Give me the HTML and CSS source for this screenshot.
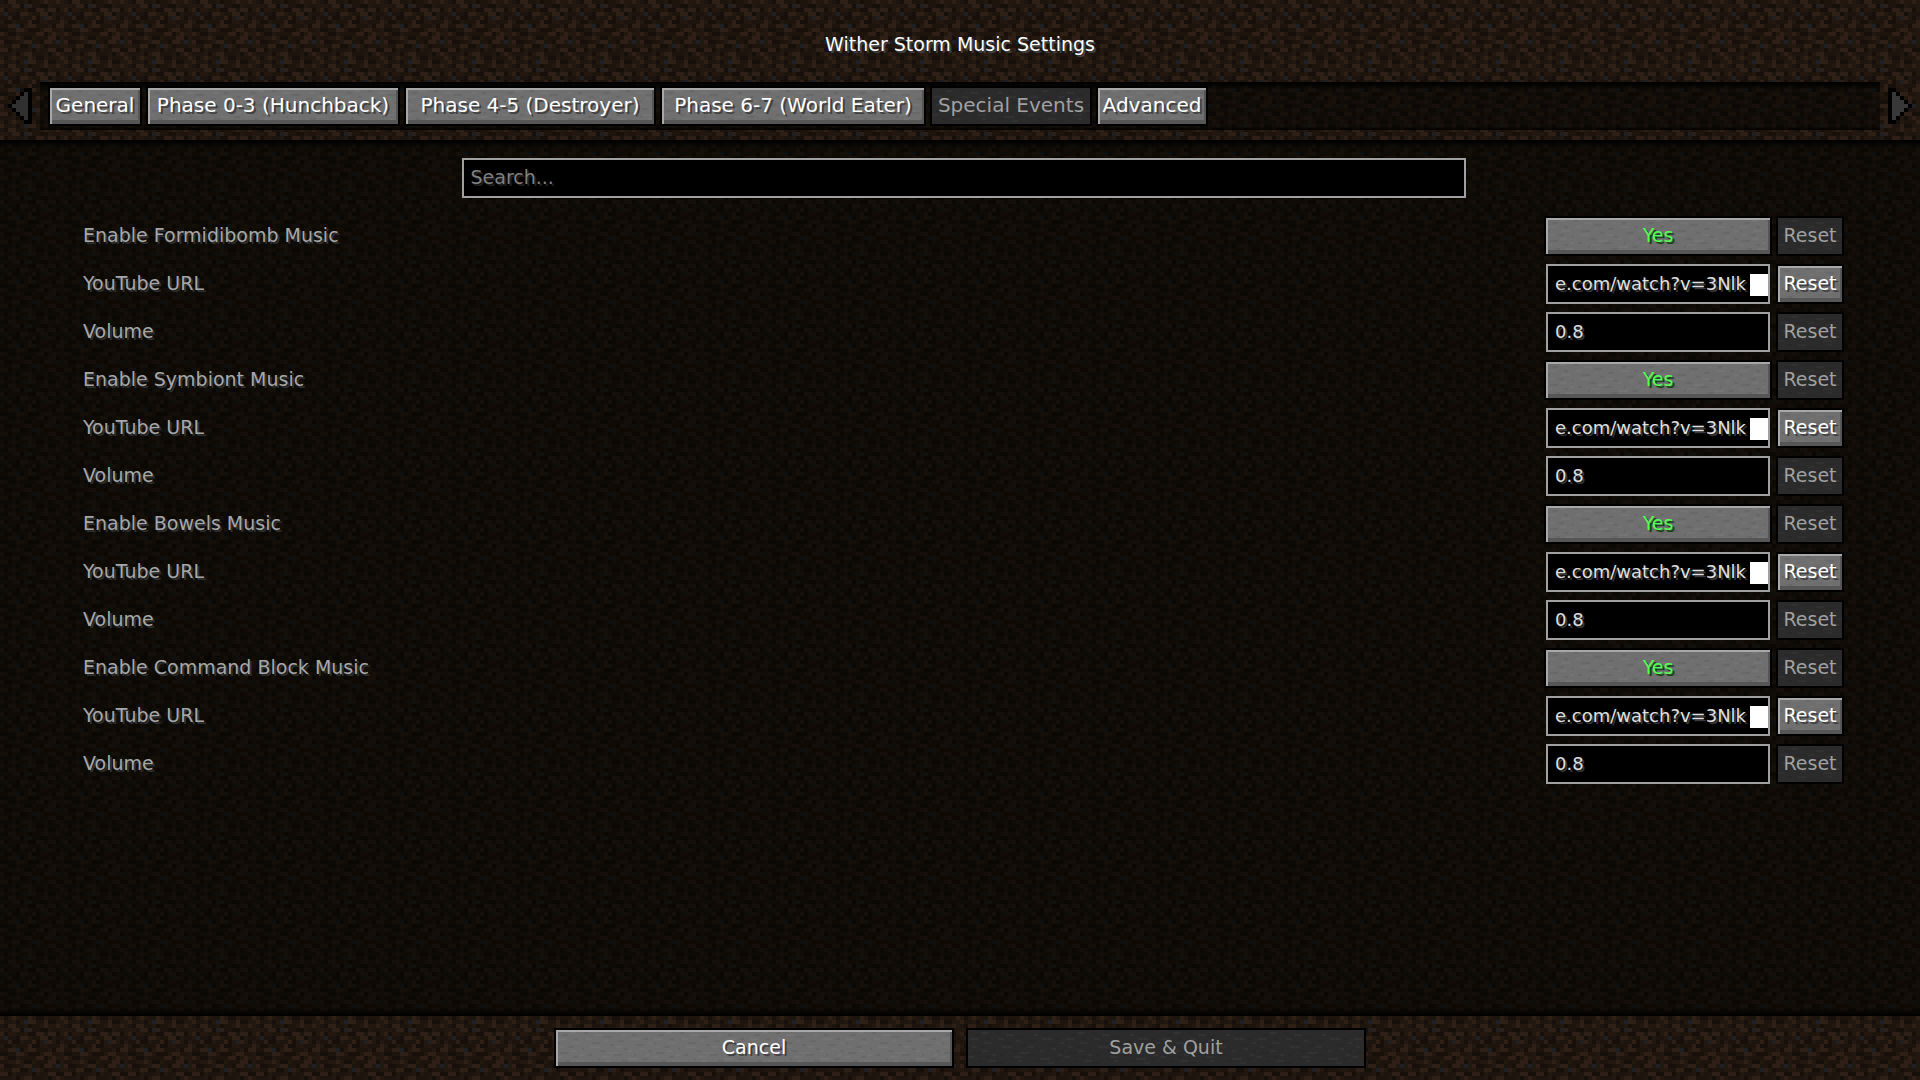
FILE: index.html
```
<!DOCTYPE html>
<html lang="en">
<head>
    <meta charset="UTF-8">
    <meta name="viewport" content="width=device-width, initial-scale=1.0">
    <title>Wither Storm Music Settings</title>
    <link rel="stylesheet" href="styles.css">
</head>
<body>
    <header class="header">
        <h1>Wither Storm Music Settings</h1>
        <div class="tab-bar">
            <button type="button" class="arrow" aria-label="Previous tabs" disabled>
                <svg width="24" height="36" viewBox="0 0 6 9" shape-rendering="crispEdges">
                    <path d="M4 0h2v9h-2v-1h-1v-1h-1v-1h-1v-1h-1v-1h1v-1h1v-1h1v-1h1z" fill="#000"/>
                    <path d="M4 1h1v7h-1v-1h-1v-1h-1v-1h-1v-1h1v-1h1v-1h1z" fill="#303030"/>
                </svg>
            </button>
            <nav class="tabs">
                <button type="button" class="btn">General</button>
                <button type="button" class="btn">Phase 0-3 (Hunchback)</button>
                <button type="button" class="btn">Phase 4-5 (Destroyer)</button>
                <button type="button" class="btn">Phase 6-7 (World Eater)</button>
                <button type="button" class="btn" disabled>Special Events</button>
                <button type="button" class="btn">Advanced</button>
            </nav>
            <button type="button" class="arrow" aria-label="Next tabs" disabled>
                <svg width="24" height="36" viewBox="0 0 6 9" shape-rendering="crispEdges">
                    <path d="M2 0h-2v9h2v-1h1v-1h1v-1h1v-1h1v-1h-1v-1h-1v-1h-1v-1h-1z" fill="#000"/>
                    <path d="M2 1h-1v7h1v-1h1v-1h1v-1h1v-1h-1v-1h-1v-1h-1z" fill="#383838"/>
                </svg>
            </button>
        </div>
    </header>

    <main class="list">
        <div class="search">
            <input type="text" class="field" placeholder="Search..." aria-label="Search">
        </div>

        <div class="row">
            <label for="formidibomb">Enable Formidibomb Music</label>
            <button type="button" class="btn toggle" id="formidibomb">Yes</button>
            <button type="button" class="btn reset" disabled>Reset</button>
        </div>
        <div class="row">
            <label for="formidibomb-url">YouTube URL</label>
            <div class="entry cursor"><input type="text" class="field" id="formidibomb-url" value="e.com/watch?v=3Nlk"></div>
            <button type="button" class="btn reset">Reset</button>
        </div>
        <div class="row">
            <label for="formidibomb-volume">Volume</label>
            <div class="entry"><input type="text" class="field" id="formidibomb-volume" value="0.8"></div>
            <button type="button" class="btn reset" disabled>Reset</button>
        </div>

        <div class="row">
            <label for="symbiont">Enable Symbiont Music</label>
            <button type="button" class="btn toggle" id="symbiont">Yes</button>
            <button type="button" class="btn reset" disabled>Reset</button>
        </div>
        <div class="row">
            <label for="symbiont-url">YouTube URL</label>
            <div class="entry cursor"><input type="text" class="field" id="symbiont-url" value="e.com/watch?v=3Nlk"></div>
            <button type="button" class="btn reset">Reset</button>
        </div>
        <div class="row">
            <label for="symbiont-volume">Volume</label>
            <div class="entry"><input type="text" class="field" id="symbiont-volume" value="0.8"></div>
            <button type="button" class="btn reset" disabled>Reset</button>
        </div>

        <div class="row">
            <label for="bowels">Enable Bowels Music</label>
            <button type="button" class="btn toggle" id="bowels">Yes</button>
            <button type="button" class="btn reset" disabled>Reset</button>
        </div>
        <div class="row">
            <label for="bowels-url">YouTube URL</label>
            <div class="entry cursor"><input type="text" class="field" id="bowels-url" value="e.com/watch?v=3Nlk"></div>
            <button type="button" class="btn reset">Reset</button>
        </div>
        <div class="row">
            <label for="bowels-volume">Volume</label>
            <div class="entry"><input type="text" class="field" id="bowels-volume" value="0.8"></div>
            <button type="button" class="btn reset" disabled>Reset</button>
        </div>

        <div class="row">
            <label for="command-block">Enable Command Block Music</label>
            <button type="button" class="btn toggle" id="command-block">Yes</button>
            <button type="button" class="btn reset" disabled>Reset</button>
        </div>
        <div class="row">
            <label for="command-block-url">YouTube URL</label>
            <div class="entry cursor"><input type="text" class="field" id="command-block-url" value="e.com/watch?v=3Nlk"></div>
            <button type="button" class="btn reset">Reset</button>
        </div>
        <div class="row">
            <label for="command-block-volume">Volume</label>
            <div class="entry"><input type="text" class="field" id="command-block-volume" value="0.8"></div>
            <button type="button" class="btn reset" disabled>Reset</button>
        </div>
    </main>

    <footer class="footer">
        <button type="button" class="btn">Cancel</button>
        <button type="button" class="btn" disabled>Save &amp; Quit</button>
    </footer>
</body>
</html>
```
FILE: styles.css
```
:root {
    /* 16x16 dirt tile, drawn at 4px per texel */
    --dirt: url("data:image/svg+xml,%3Csvg xmlns='http://www.w3.org/2000/svg' width='64' height='64' viewBox='0 -.5 16 16' shape-rendering='crispEdges'%3E%3Cpath fill='%23231810' d='M0-.5h16v16H0z'/%3E%3Cpath stroke='%231d140e' d='M0 0h1M4 0h2M8 0h2M2 1h1M8 1h2M13 1h2M4 2h2M11 2h1M2 3h2M8 3h2M14 3h2M0 4h2M6 4h2M4 5h3M12 5h3M0 6h2M9 6h3M2 7h2M13 7h2M5 8h4M0 9h2M9 9h3M3 10h2M8 10h2M12 11h3M1 11h2M4 12h3M10 12h2M0 13h3M8 13h3M5 14h2M12 14h3M1 15h2M9 15h2'/%3E%3Cpath stroke='%23160f0a' d='M1 0h1M7 0h1M5 1h1M10 1h2M1 2h1M7 2h2M14 2h1M4 3h1M12 3h1M3 4h2M9 4h1M14 4h1M1 5h2M8 5h2M5 6h1M13 6h1M0 7h2M7 7h3M2 8h2M11 8h1M6 9h2M14 9h1M1 10h2M10 10h1M5 11h2M11 11h1M2 12h1M8 12h1M14 12h2M4 13h1M12 13h1M1 14h1M9 14h2M4 15h1M12 15h2'/%3E%3Cpath stroke='%232e2017' d='M2 0h2M11 0h1M14 0h1M3 1h2M7 1h1M0 2h1M9 2h2M12 2h2M5 3h2M10 3h2M2 4h1M8 4h1M12 4h1M7 5h1M15 5h1M2 6h2M7 6h2M14 6h2M4 7h2M11 7h2M0 8h1M9 8h2M13 8h1M4 9h1M12 9h2M0 10h1M6 10h2M11 10h2M3 11h2M9 11h1M0 12h2M12 12h2M6 13h2M14 13h1M3 14h1M7 14h1M15 14h1M0 15h1M7 15h2M11 15h1'/%3E%3Cpath stroke='%231d2125' d='M6 1h1M1 3h1M11 4h1M4 6h1M14 10h1M8 11h1M6 15h1'/%3E%3C/svg%3E");
    /* worn stone streaks laid over the button colour */
    --stone: url("data:image/svg+xml,%3Csvg xmlns='http://www.w3.org/2000/svg' width='96' height='36' viewBox='0 -.5 48 18' shape-rendering='crispEdges'%3E%3Cpath stroke='%23000' stroke-opacity='.06' d='M3 2h3M14 1h2M24 3h4M38 2h2M9 4h2M31 5h3M44 4h2M1 6h1M18 6h4M27 7h2M40 7h4M6 8h3M13 9h1M34 9h2M22 10h3M46 10h2M2 11h4M16 12h2M29 12h4M39 12h1M9 13h2M21 14h1M43 14h3M5 15h2M33 15h3M14 16h4'/%3E%3Cpath stroke='%23fff' stroke-opacity='.03' d='M7 1h3M19 2h4M33 2h2M1 4h4M15 4h3M37 4h5M8 6h4M24 5h2M46 6h2M2 8h2M17 8h5M30 8h3M42 9h2M7 10h3M26 11h5M36 10h2M12 12h2M45 12h2M0 13h3M23 13h4M36 14h5M10 15h4M25 15h2M40 16h3'/%3E%3C/svg%3E");
}

* {
    box-sizing: border-box;
}

body {
    margin: 0;
    min-height: 100vh;
    display: flex;
    flex-direction: column;
    background: #231810 var(--dirt);
    color: #fff;
    font-family: "DejaVu Sans", sans-serif;
    font-size: 19px;
    line-height: 24px;
}

h1 {
    margin: 0;
    font-size: 19px;
    font-weight: normal;
    text-align: center;
    text-shadow: 2px 2px #3e4246;
}

button, input {
    font: inherit;
}

.header {
    padding: 32px 0 10px;
}

.tab-bar {
    display: flex;
    align-items: center;
    gap: 8px;
    margin-top: 26px;
    padding: 0 8px;
}

.arrow {
    display: flex;
    padding: 0;
    border: none;
    background: none;
}

.tabs {
    flex: 1;
    display: grid;
    grid-template-columns: 94px 254px 252px 266px 162px 112px;
    gap: 4px;
    padding: 4px 8px;
    font-size: 20px;
    background: linear-gradient(#000, transparent 8px, transparent 44px, rgba(0, 0, 0, 0.8)),
        linear-gradient(rgba(4, 4, 0, 0.55), rgba(4, 4, 0, 0.55));
}

.btn {
    height: 40px;
    padding: 0 0 2px;
    border: 2px solid #000;
    background: #6f6f6f var(--stone);
    box-shadow: inset 2px 2px #a8a8a8, inset -2px -4px #565656;
    color: #fff;
    text-shadow: 2px 2px #3f3f3f;
    text-align: center;
    white-space: nowrap;
}

.btn:disabled {
    background-color: #2b2b2b;
    box-shadow: none;
    color: #a0a0a0;
    text-shadow: none;
}

.list {
    flex: 1;
    display: flex;
    flex-direction: column;
    gap: 8px;
    padding: 18px 76px 18px 83px;
    background: linear-gradient(#000, transparent 8px),
        linear-gradient(to top, #000, transparent 8px),
        linear-gradient(rgba(4, 4, 0, 0.6), rgba(4, 4, 0, 0.6));
}

.field {
    display: block;
    width: 100%;
    height: 40px;
    padding: 0 7px 2px;
    border: 2px solid #a0a0a0;
    border-radius: 0;
    outline: none;
    background: #000;
    color: #e0e0e0;
    text-shadow: 2px 2px #383838;
}

.field::placeholder {
    color: #808080;
    opacity: 1;
    text-shadow: 2px 2px #202020;
}

.search {
    width: 1004px;
    max-width: 100%;
    margin: 0 auto 10px;
}

.row {
    display: flex;
    align-items: center;
    gap: 4px;
}

.row label {
    flex: 1;
    padding-bottom: 2px;
    color: #a8a8a8;
    text-shadow: 2px 2px #2d3032;
}

.toggle {
    width: 228px;
    color: #55ff55;
    text-shadow: 2px 2px #153f15;
}

.entry {
    position: relative;
    width: 228px;
    padding: 0 2px;
    font-size: 18px;
}

/* block cursor at the end of the visible text */
.cursor::after {
    content: "";
    position: absolute;
    top: 10px;
    right: 4px;
    width: 18px;
    height: 22px;
    background: #fff;
}

.reset {
    width: 68px;
}

.footer {
    display: flex;
    justify-content: center;
    gap: 12px;
    padding: 12px;
}

.footer .btn {
    width: 400px;
}
```
